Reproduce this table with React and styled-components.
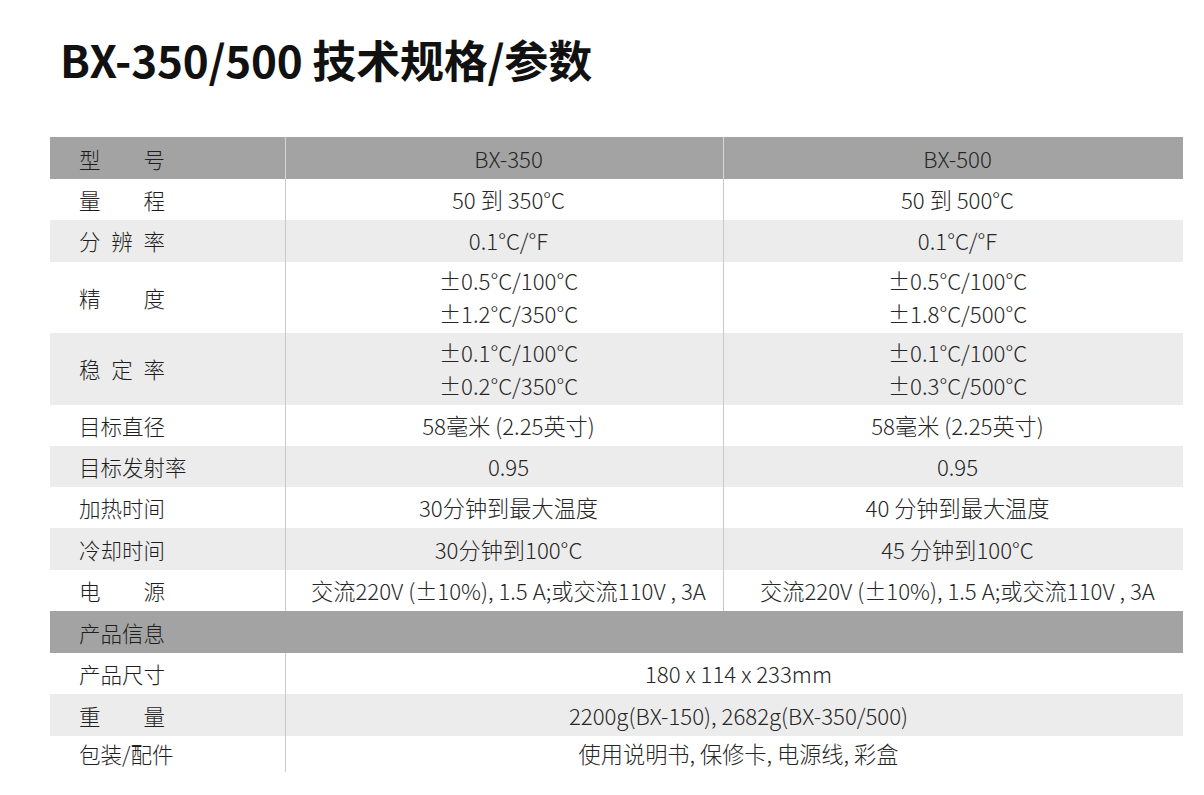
import React from 'react';
import styled, { createGlobalStyle } from 'styled-components';

const GlobalStyle = createGlobalStyle`
  body {
    margin: 0;
    background: #fff;
    font-family: "Noto Sans CJK SC", "Noto Sans", sans-serif;
    color: #333;
  }
`;

const Page = styled.div`
  width: 1204px;
  height: 795px;
  padding: 26px 0 0 50px;
  box-sizing: border-box;
  overflow: hidden;
`;

const Title = styled.h1`
  margin: 0 0 0 10px;
  font-size: 44px;
  font-weight: 700;
  line-height: 66px;
  color: #111;
  letter-spacing: -0.2px;
`;

const Table = styled.div`
  margin-top: 45px;
  width: 1133px;
`;

const Row = styled.div`
  display: grid;
  grid-template-columns: 235px 438px 460px;
  height: ${({ tall, last, tone }) =>
    tall ? '71.5px' : last ? '36px' : tone === 'head' ? '42px' : '41.3px'};
  background: ${({ tone }) =>
    tone === 'head' ? '#a3a3a3' : tone === 'stripe' ? '#ececec' : '#fff'};
`;

const Label = styled.div`
  display: flex;
  align-items: center;
  padding-left: 29px;
  font-size: 21.5px;
  font-weight: 300;
  color: #1e1e1e;
  grid-column: ${({ wide }) => (wide ? '1 / -1' : 'auto')};
`;

const Spread = styled.span`
  display: flex;
  justify-content: space-between;
  width: 4em;
`;

const Cell = styled.div`
  display: flex;
  flex-direction: column;
  align-items: center;
  justify-content: center;
  padding-left: 8px;
  border-left: 1px solid ${({ head }) => (head ? '#d6d6d6' : '#c9c9c9')};
  font-size: 22.2px;
  font-weight: 300;
  line-height: 33px;
  color: #262626;
  white-space: nowrap;
  grid-column: ${({ span }) => (span ? `span ${span}` : 'auto')};
`;

const SpacedLabel = ({ text }) => (
  <Spread>
    {text.split('').map((ch, i) => (
      <span key={i}>{ch}</span>
    ))}
  </Spread>
);

const specs = [
  { label: '量程', spread: true, a: ['50 到 350°C'], b: ['50 到 500°C'] },
  { label: '分辨率', spread: true, a: ['0.1°C/°F'], b: ['0.1°C/°F'] },
  {
    label: '精度',
    spread: true,
    a: ['±0.5°C/100°C', '±1.2°C/350°C'],
    b: ['±0.5°C/100°C', '±1.8°C/500°C'],
  },
  {
    label: '稳定率',
    spread: true,
    a: ['±0.1°C/100°C', '±0.2°C/350°C'],
    b: ['±0.1°C/100°C', '±0.3°C/500°C'],
  },
  { label: '目标直径', a: ['58毫米 (2.25英寸)'], b: ['58毫米 (2.25英寸)'] },
  { label: '目标发射率', a: ['0.95'], b: ['0.95'] },
  { label: '加热时间', a: ['30分钟到最大温度'], b: ['40 分钟到最大温度'] },
  { label: '冷却时间', a: ['30分钟到100°C'], b: ['45 分钟到100°C'] },
  {
    label: '电源',
    spread: true,
    a: ['交流220V (±10%), 1.5 A;或交流110V , 3A'],
    b: ['交流220V (±10%), 1.5 A;或交流110V , 3A'],
  },
];

const info = [
  { label: '产品尺寸', value: '180 x 114 x 233mm' },
  { label: '重量', spread: true, value: '2200g(BX-150), 2682g(BX-350/500)' },
  { label: '包装/配件', value: '使用说明书, 保修卡, 电源线, 彩盒' },
];

const renderLabel = (row) =>
  row.spread ? <SpacedLabel text={row.label} /> : row.label;

const App = () => {
  return (
    <Page>
      <GlobalStyle />
      <Title>BX-350/500 技术规格/参数</Title>
      <Table>
        <Row tone="head">
          <Label>
            <SpacedLabel text="型号" />
          </Label>
          <Cell head>BX-350</Cell>
          <Cell head>BX-500</Cell>
        </Row>
        {specs.map((row, i) => (
          <Row key={row.label} tone={i % 2 ? 'stripe' : 'plain'} tall={row.a.length > 1}>
            <Label>{renderLabel(row)}</Label>
            <Cell>
              {row.a.map((line) => (
                <span key={line}>{line}</span>
              ))}
            </Cell>
            <Cell>
              {row.b.map((line) => (
                <span key={line}>{line}</span>
              ))}
            </Cell>
          </Row>
        ))}
        <Row tone="head">
          <Label wide>产品信息</Label>
        </Row>
        {info.map((row, i) => (
          <Row
            key={row.label}
            tone={i % 2 ? 'stripe' : 'plain'}
            last={i === info.length - 1}
          >
            <Label>{renderLabel(row)}</Label>
            <Cell span={2}>{row.value}</Cell>
          </Row>
        ))}
      </Table>
    </Page>
  );
};

export default App;
